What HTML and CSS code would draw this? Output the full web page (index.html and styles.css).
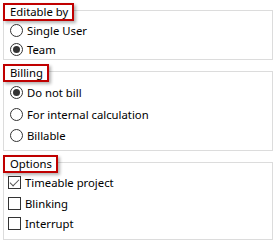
FILE: index.html
```html
<!DOCTYPE html>
<html>
  <head>
    <title>Project settings</title>
    <link rel="stylesheet" href="styles.css">
  </head>
  <body>
    <div class="group group-first">
      <span class="legend">Editable by</span>
      <div class="rows rows-tight">
        <label class="row"><span class="radio"></span>Single User</label>
        <label class="row"><span class="radio checked"></span>Team</label>
      </div>
    </div>

    <div class="group">
      <span class="legend">Billing</span>
      <div class="rows rows-billing">
        <label class="row"><span class="radio checked"></span>Do not bill</label>
        <label class="row"><span class="radio"></span>For internal calculation</label>
        <label class="row"><span class="radio"></span>Billable</label>
      </div>
    </div>

    <div class="group">
      <span class="legend">Options</span>
      <div class="rows rows-options">
        <label class="row"><span class="check checked"></span>Timeable project</label>
        <label class="row"><span class="check"></span>Blinking</label>
        <label class="row"><span class="check"></span>Interrupt</label>
      </div>
    </div>
  </body>
</html>
```

FILE: styles.css
```css
:root {
  --groupborder: rgb(220,220,220);
  --highlight: rgb(192,0,0);
  --textcolor: rgb(0,0,0);
  --controlcolor: rgb(51,51,51);
}

* {
  box-sizing: border-box;
}

body {
  margin: 0;
  background: #fff;
  font-family: "Noto Sans", sans-serif;
  font-size: 11.3px;
  color: var(--textcolor);
}

.group {
  margin: 11px 6px 0 3px;
  border: 1px solid var(--groupborder);
}

.group-first {
  margin-top: 10px;
}

.legend {
  display: block;
  width: fit-content;
  height: 18px;
  margin: -8px 0 0 -1px;
  padding: 0 4px 0 5px;
  line-height: 14px;
  border: 2px solid var(--highlight);
  background: #fff;
  box-shadow: 2px 2px 3px rgba(0,0,0,0.3);
}

.rows {
  display: flex;
  flex-direction: column;
}

.row {
  display: flex;
  align-items: center;
  gap: 4px;
  padding-left: 6px;
}

.rows-tight .row { height: 19px; }

.rows-billing .row { height: 21.5px; }
.rows-billing { padding-bottom: 3px; }

.rows-options .row { height: 20.5px; }
.rows-options { padding-bottom: 5px; }

.radio {
  position: relative;
  width: 13px;
  height: 13px;
  border: 1px solid var(--controlcolor);
  border-radius: 50%;
  background: #fff;
}

.radio.checked::after {
  content: "";
  position: absolute;
  left: 2px;
  top: 2px;
  width: 7px;
  height: 7px;
  border-radius: 50%;
  background: var(--controlcolor);
}

.check {
  position: relative;
  width: 13px;
  height: 13px;
  margin-left: -2px;
  border: 1px solid var(--controlcolor);
  background: #fff;
}

.check.checked::after {
  content: "";
  position: absolute;
  left: 3px;
  top: 0px;
  width: 4px;
  height: 8px;
  border: solid rgb(85,85,85);
  border-width: 0 1.5px 1.5px 0;
  transform: rotate(45deg);
}
```
